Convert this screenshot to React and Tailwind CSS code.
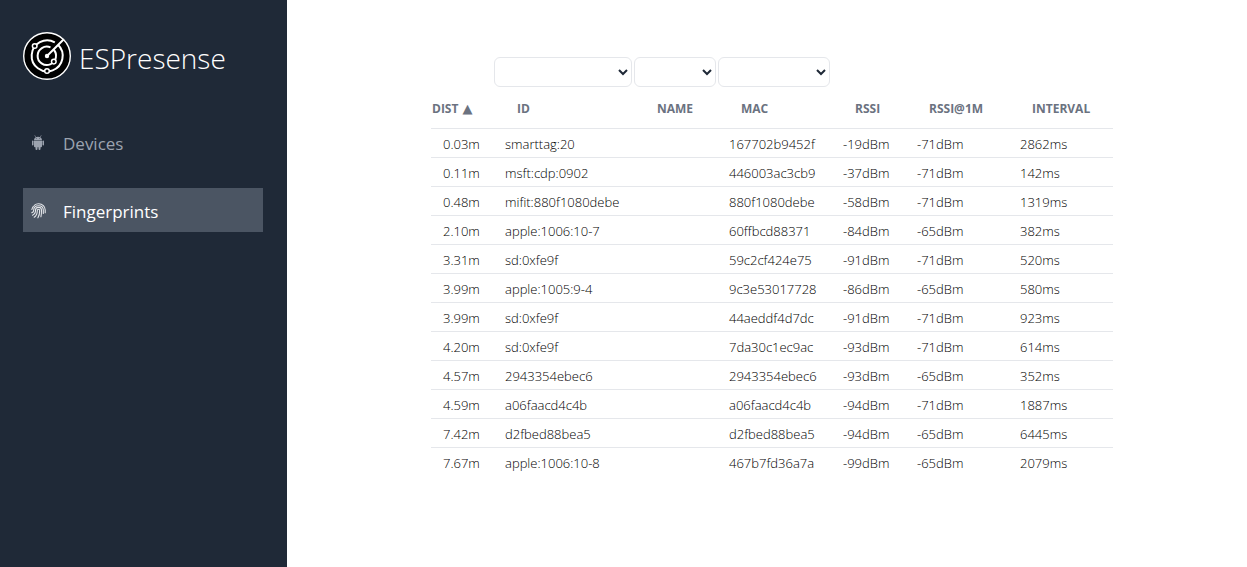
import { useState } from "react";

const columns = [
    { key: "dist", label: "Dist", width: "w-[62px]" },
    { key: "id", label: "ID", width: "w-[140px]", filter: true },
    { key: "name", label: "Name", width: "w-[84px]", filter: true },
    { key: "mac", label: "MAC", width: "w-[114px]", filter: true },
    { key: "rssi", label: "RSSI", width: "w-[74px]" },
    { key: "rssi1m", label: "RSSI@1m", width: "w-[103px]" },
    { key: "interval", label: "Interval", width: "w-[105px]" },
];

const fingerprints = [
    { dist: 0.03, id: "smarttag:20", mac: "167702b9452f", rssi: -19, rssi1m: -71, interval: 2862 },
    { dist: 0.11, id: "msft:cdp:0902", mac: "446003ac3cb9", rssi: -37, rssi1m: -71, interval: 142 },
    { dist: 0.48, id: "mifit:880f1080debe", mac: "880f1080debe", rssi: -58, rssi1m: -71, interval: 1319 },
    { dist: 2.1, id: "apple:1006:10-7", mac: "60ffbcd88371", rssi: -84, rssi1m: -65, interval: 382 },
    { dist: 3.31, id: "sd:0xfe9f", mac: "59c2cf424e75", rssi: -91, rssi1m: -71, interval: 520 },
    { dist: 3.99, id: "apple:1005:9-4", mac: "9c3e53017728", rssi: -86, rssi1m: -65, interval: 580 },
    { dist: 3.99, id: "sd:0xfe9f", mac: "44aeddf4d7dc", rssi: -91, rssi1m: -71, interval: 923 },
    { dist: 4.2, id: "sd:0xfe9f", mac: "7da30c1ec9ac", rssi: -93, rssi1m: -71, interval: 614 },
    { dist: 4.57, id: "2943354ebec6", mac: "2943354ebec6", rssi: -93, rssi1m: -65, interval: 352 },
    { dist: 4.59, id: "a06faacd4c4b", mac: "a06faacd4c4b", rssi: -94, rssi1m: -71, interval: 1887 },
    { dist: 7.42, id: "d2fbed88bea5", mac: "d2fbed88bea5", rssi: -94, rssi1m: -65, interval: 6445 },
    { dist: 7.67, id: "apple:1006:10-8", mac: "467b7fd36a7a", rssi: -99, rssi1m: -65, interval: 2079 },
];

function formatCell(row, key) {
    switch (key) {
        case "dist":
            return `${row.dist.toFixed(2)}m`;
        case "rssi":
        case "rssi1m":
            return `${row[key]}dBm`;
        case "interval":
            return `${row.interval}ms`;
        default:
            return row[key] ?? "";
    }
}

function Logo() {
    return (
        <svg viewBox="0 0 48 48" className="size-12" fill="none" stroke="#fff" aria-hidden="true">
            <circle cx="24" cy="24" r="23.3" fill="#000" strokeWidth="1.4" />
            <path d="M35 12.8A15.5 15.5 0 1 1 31.8 10.4" strokeWidth="2" />
            <path d="M30.5 17.5A9.2 9.2 0 1 1 27.5 15.4" strokeWidth="2" />
            <path d="M24 24 40.8 7.2" strokeWidth="2" />
            <circle cx="24" cy="24" r="2.2" fill="#fff" stroke="none" />
            <circle cx="11.7" cy="14" r="2.3" fill="#000" strokeWidth="1.5" />
            <circle cx="30.8" cy="29.6" r="2.3" fill="#000" strokeWidth="1.5" />
            <circle cx="24" cy="39" r="2.3" fill="#000" strokeWidth="1.5" />
        </svg>
    );
}

function AndroidIcon({ className }) {
    return (
        <svg viewBox="0 0 16 16" className={className} fill="currentColor" aria-hidden="true">
            <path d="M3 5C3.2 3 5 1.8 7 1.8S10.8 3 11 5z" />
            <path d="M3 5.5h8v5.7a1 1 0 0 1-1 1H4a1 1 0 0 1-1-1z" />
            <rect x="1" y="5.5" width="1.5" height="5" rx=".7" />
            <rect x="11.5" y="5.5" width="1.5" height="5" rx=".7" />
            <rect x="4.5" y="11" width="2" height="4" rx=".9" />
            <rect x="7.5" y="11" width="2" height="4" rx=".9" />
            <path d="M5 2.5 3.7.3M9 2.5 10.3.3" fill="none" stroke="currentColor" strokeWidth=".6" />
            <circle cx="5.3" cy="3.6" r=".45" fill="#1f2937" />
            <circle cx="8.7" cy="3.6" r=".45" fill="#1f2937" />
        </svg>
    );
}

function FingerprintIcon({ className }) {
    return (
        <svg
            viewBox="0 0 16 16"
            className={className}
            fill="none"
            stroke="currentColor"
            strokeWidth="1.1"
            strokeLinecap="round"
            aria-hidden="true"
        >
            <path d="M3.3 2.3C4.5 1.3 6 .8 7.6.8c3.9 0 6.6 2.7 6.6 6.3v2.6" />
            <path d="M.9 6.5C1.2 5.2 1.7 4.2 2.4 3.4" />
            <path d="M.8 9.8C2.2 9.3 2.7 8.5 2.7 7.2c0-2.6 2-4.5 4.9-4.5s4.7 1.9 4.7 4.6v3.2" />
            <path d="M1.5 12.2C3.8 11.3 4.5 9.6 4.5 7.3c0-1.8 1.2-2.9 3.1-2.9s2.9 1.1 2.9 2.9c0 2.7 0 4.6-.6 6.5" />
            <path d="M3.2 14.2C5.6 12.5 6.3 10.5 6.3 7.4c0-.8.5-1.2 1.2-1.2s1.2.4 1.2 1.2c0 3-.5 5.2-1.8 7.4" />
        </svg>
    );
}

function NavLink({ href, icon: Icon, active, children }) {
    return (
        <a
            href={href}
            aria-current={active ? "page" : undefined}
            className={`flex h-11 items-center gap-4 px-2 pt-0.5 text-[17px] ${active ? "bg-[#4b5563] text-white" : "text-[#9ca3af]"}`}
        >
            <Icon className={`size-4 ${active ? "text-[#e5e7eb]" : ""}`} />
            <span className="pt-0.5">{children}</span>
        </a>
    );
}

function Sidebar() {
    return (
        <aside className="w-[287px] shrink-0 bg-[#1f2937] pt-8 pr-6 pl-[23px]">
            <div className="flex items-center gap-2">
                <Logo />
                <h1 className="mt-1 text-[28px] leading-10 font-light text-white">ESPresense</h1>
            </div>
            <nav className="mt-10 flex flex-col gap-6">
                <NavLink href="#devices" icon={AndroidIcon}>Devices</NavLink>
                <NavLink href="#fingerprints" icon={FingerprintIcon} active>Fingerprints</NavLink>
            </nav>
        </aside>
    );
}

export default function App() {
    const [filters, setFilters] = useState({});
    const [ascending, setAscending] = useState(true);

    const rows = fingerprints
        .filter((row) => columns.every(({ key }) => !filters[key] || row[key] === filters[key]))
        .sort((a, b) => (ascending ? a.dist - b.dist : b.dist - a.dist));

    return (
        <div className="flex min-h-screen bg-white font-['Open_Sans','Noto_Sans',sans-serif]">
            <Sidebar />
            <main className="flex flex-1 items-start justify-center pt-14 pl-2.5">
                <table className="w-[682px] table-fixed border-collapse text-left">
                    <thead>
                        <tr>
                            {columns.map(({ key, label, width, filter }) => (
                                <td key={key} className={`${width} h-8 px-px`}>
                                    {filter && (
                                        <select
                                            aria-label={`Filter by ${label}`}
                                            value={filters[key] ?? ""}
                                            onChange={(e) => setFilters({ ...filters, [key]: e.target.value })}
                                            className="block h-[30px] w-full rounded-md border border-[#e5e7eb] bg-white text-sm text-[#1f2937]"
                                        >
                                            <option value=""></option>
                                            {[...new Set(fingerprints.map((row) => row[key]).filter(Boolean))].map((value) => (
                                                <option key={value} value={value}>{value}</option>
                                            ))}
                                        </select>
                                    )}
                                </td>
                            ))}
                        </tr>
                        <tr className="border-b border-[#e5e7eb] text-xs font-semibold text-[#6b7280] uppercase">
                            {columns.map(({ key, label }) => (
                                <th key={key} className={`h-10 pt-0.5 whitespace-nowrap ${key === "dist" ? "pl-px" : "pl-6"}`}>
                                    {key === "dist" ? (
                                        <button onClick={() => setAscending(!ascending)} className="flex items-center gap-1 uppercase">
                                            {label}
                                            <span className="font-['DejaVu_Sans',sans-serif] text-[13px] leading-3 font-normal">{ascending ? "▲" : "▼"}</span>
                                        </button>
                                    ) : (
                                        label
                                    )}
                                </th>
                            ))}
                        </tr>
                    </thead>
                    <tbody>
                        {rows.map((row) => (
                            <tr key={row.mac} className="border-b border-[#e5e7eb] text-[13px] leading-5 font-light text-black last:border-0">
                                {columns.map(({ key }) => (
                                    <td key={key} className="pt-[5px] pb-[3px] pl-3 whitespace-nowrap">{formatCell(row, key)}</td>
                                ))}
                            </tr>
                        ))}
                    </tbody>
                </table>
            </main>
        </div>
    );
}
